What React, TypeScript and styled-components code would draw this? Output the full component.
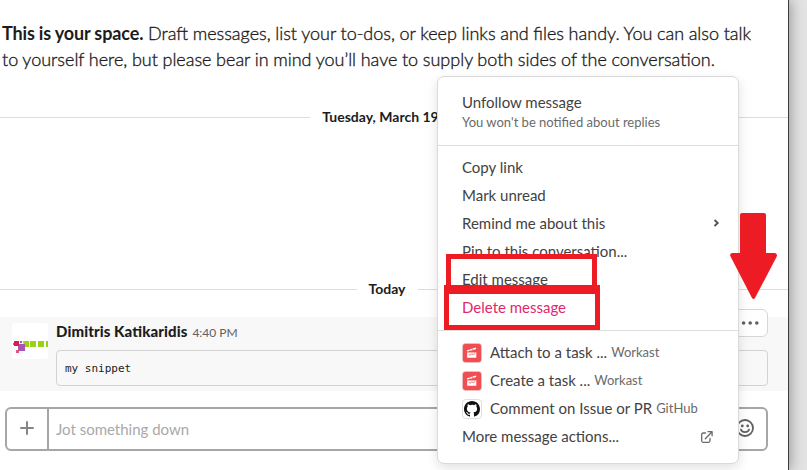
import React from "react";
import styled, { createGlobalStyle } from "styled-components";

const GlobalStyle = createGlobalStyle`
  * { box-sizing: border-box; }
  body { margin: 0; background: #e3e3e3; font-family: Lato, "Noto Sans", sans-serif; overflow: hidden; }
`;

const Page = styled.main`
  position: relative;
  width: 807px;
  height: 470px;
  overflow: hidden;
  display: flex;
  background: #e3e3e3;
`;

const Channel = styled.section`
  width: 789px;
  height: 470px;
  flex: none;
  background: #fff;
  border-right: 1px solid #3c3c3e;
  box-shadow: 2px 0 12px rgba(0, 0, 0, 0.32);
  display: flex;
  flex-direction: column;
  overflow: hidden;
`;

const Intro = styled.p`
  margin: 20px 0 0 2px;
  height: 53px;
  font-size: 18px;
  line-height: 26px;
  color: #1d1c1d;
  font-weight: 300;
  word-spacing: -0.28px;
  -webkit-text-stroke: 0.35px #1d1c1d;
  white-space: nowrap;
`;

const IntroLead = styled.b`
  font-weight: 700;
  letter-spacing: -0.1px;
  -webkit-text-stroke: 0;
`;

const DateDivider = styled.div<{ $gap: number }>`
  margin: ${(p) => p.$gap}px 0 0 -14px;
  height: 20px;
  display: flex;
  align-items: center;
  gap: 12px;
  font-size: 14px;
  line-height: 20px;
  font-weight: 700;
  color: #1d1c1d;
  white-space: nowrap;
  &::before, &::after { content: ""; flex: 1; height: 1px; background: #dddddd; }
`;

const Message = styled.article`
  position: relative;
  margin-top: 18px;
  height: 74px;
  padding: 6px 20px 5px 12px;
  background: #f8f8f8;
  display: flex;
  gap: 8px;
`;

const Avatar = styled.svg`
  flex: none;
  width: 36px;
  height: 36px;
  border-radius: 3px;
  background: #fff;
`;

const MessageBody = styled.div`
  flex: 1;
`;

const Meta = styled.div`
  height: 27px;
  line-height: 16px;
  display: flex;
  align-items: baseline;
  gap: 5px;
`;

const Author = styled.strong`
  font-size: 15px;
  font-weight: 900;
  letter-spacing: 0.1px;
  font-feature-settings: "liga" 1;
  color: #1d1c1d;
`;

const Time = styled.span`
  font-size: 12px;
  color: #616061;
`;

const Snippet = styled.pre`
  margin: 0;
  height: 36px;
  padding: 0 8px;
  border: 1px solid #d2d2d2;
  border-radius: 4px;
  font: 11px/35px "DejaVu Sans Mono", monospace;
  color: #1d1c1d;
`;

const HoverActions = styled.div`
  position: absolute;
  top: -8px;
  right: 20px;
  width: 50px;
  height: 28px;
  padding-right: 8px;
  display: flex;
  align-items: center;
  justify-content: flex-end;
  border: 1px solid #d6d6d6;
  border-radius: 6px;
  background: #fff;
`;

const Composer = styled.div`
  margin: 16px 20px 0 5px;
  height: 44px;
  display: flex;
  border: 2px solid #a6a6a6;
  border-radius: 6px;
`;

const AttachButton = styled.div`
  width: 42px;
  border-right: 2px solid #a6a6a6;
  display: flex;
  align-items: center;
  justify-content: center;
  padding-bottom: 2px;
`;

const Placeholder = styled.span`
  flex: 1;
  padding-left: 7px;
  font-size: 15px;
  line-height: 40px;
  color: #a9a9a9;
`;

const EmojiButton = styled.div`
  width: 40px;
  padding: 9px 0 0 9px;
`;

const Menu = styled.nav`
  position: absolute;
  left: 437px;
  top: 76px;
  width: 302px;
  height: 388px;
  border: 1px solid #dadada;
  border-radius: 7px;
  background: #fff;
  box-shadow: 0 4px 12px rgba(0, 0, 0, 0.12);
  color: #434243;
  font-size: 15px;
`;

const MenuHeader = styled.div`
  height: 69px;
  padding: 15px 24px 0;
  border-bottom: 1px solid #dddddd;
`;

const HeaderTitle = styled.div`
  line-height: 20px;
`;

const HeaderNote = styled.div`
  font-size: 13px;
  line-height: 20px;
  color: #6b6a6b;
`;

const MenuGroup = styled.div`
  padding: 7px 18px 9px 24px;
  & + & { border-top: 1px solid #dddddd; }
`;

const MenuItem = styled.div<{ $danger?: boolean }>`
  height: 28px;
  line-height: 28px;
  display: flex;
  align-items: center;
  white-space: nowrap;
  color: ${(p) => (p.$danger ? "#e3286a" : "inherit")};
  & > svg:last-child { margin-left: auto; }
`;

const AppIcon = styled.svg`
  width: 20px;
  height: 20px;
  flex: none;
  margin: 2px 8px 0 0;
`;

const AppName = styled.span`
  margin-left: 4px;
  font-size: 13px;
  line-height: 30px;
  color: #6b6a6b;
`;

const Highlight = styled.div<{ $x: number; $y: number; $w: number; $h: number }>`
  position: absolute;
  left: ${(p) => p.$x}px;
  top: ${(p) => p.$y}px;
  width: ${(p) => p.$w}px;
  height: ${(p) => p.$h}px;
  border: 5px solid #ed1c24;
`;

const Arrow = styled.svg`
  position: absolute;
  left: 729px;
  top: 212px;
`;

const WorkastIcon = () => (
  <AppIcon viewBox="0 0 20 20">
    <rect x="0.5" y="0.5" width="19" height="19" rx="3" fill="#f04e53" stroke="#e3d5d5" strokeWidth="0.5" />
    <path d="M5 7.2 13.8 4.4 14.3 6 5.4 8.8Z M5.2 9H14.3V14.8H5.2Z" fill="#fff" />
    <path d="M7 6.6 8.6 8M10 5.7 11.5 7.1M5.2 9.1H14.3M6.8 11.2 8.1 12.3 10 10.7 11.2 11.8 13.4 10.2" stroke="#f04e53" strokeWidth="0.8" fill="none" />
  </AppIcon>
);

const GitHubIcon = () => (
  <AppIcon viewBox="0 0 20 20">
    <rect x="0.5" y="0.5" width="19" height="19" rx="3" fill="#fff" stroke="#dedede" />
    <path
      transform="translate(2 2)"
      fill="#111"
      d="M8 0C3.58 0 0 3.58 0 8c0 3.54 2.29 6.53 5.47 7.59.4.07.55-.17.55-.38 0-.19-.01-.82-.01-1.49-2.01.37-2.53-.49-2.69-.94-.09-.23-.48-.94-.82-1.13-.28-.15-.68-.52-.01-.53.63-.01 1.08.58 1.23.82.72 1.21 1.87.87 2.33.66.07-.52.28-.87.51-1.07-1.78-.2-3.64-.89-3.64-3.95 0-.87.31-1.59.82-2.15-.08-.2-.36-1.02.08-2.12 0 0 .67-.21 2.2.82A7.6 7.6 0 0 1 8 3.86c.68 0 1.36.09 2 .27 1.53-1.04 2.2-.82 2.2-.82.44 1.1.16 1.92.08 2.12.51.56.82 1.27.82 2.15 0 3.07-1.87 3.75-3.65 3.95.29.25.54.73.54 1.48 0 1.07-.01 1.93-.01 2.2 0 .21.15.46.55.38A8.01 8.01 0 0 0 16 8c0-4.42-3.58-8-8-8Z"
    />
  </AppIcon>
);

export default function App() {
  return (
    <>
      <GlobalStyle />
      <Page>
        <Channel>
          <Intro>
            <IntroLead>This is your space.</IntroLead> Draft messages, list your to-dos, or keep links and files handy. You can also talk
            <br />
            to yourself here, but please bear in mind you’ll have to supply both sides of the conversation.
          </Intro>
          <DateDivider $gap={34}>Tuesday, March 19th</DateDivider>
          <DateDivider $gap={152}>Today</DateDivider>
          <Message>
            <Avatar viewBox="0 0 36 36">
              <path d="M11 18H17V24H12Z M18 18H24V24H18Z M26 18H32V24H26Z M34 18H36V24H34Z" fill="#9bd117" />
              <path d="M6 21H13V28H6Z M8 18H10V20H8Z" fill="#a855b5" />
              <path d="M2 18H7V23H2Z" fill="#d91c50" />
              <path d="M1 20H2V22H1Z M4 27H7V30H4Z" fill="#ea5078" />
            </Avatar>
            <MessageBody>
              <Meta>
                <Author>Dimitris Katikaridis</Author>
                <Time>4:40 PM</Time>
              </Meta>
              <Snippet>my snippet</Snippet>
            </MessageBody>
            <HoverActions>
              <svg width="18" height="6" viewBox="0 0 18 6" fill="#616061">
                <circle cx="2.6" cy="3" r="1.8" />
                <circle cx="9.2" cy="3" r="1.8" />
                <circle cx="15.8" cy="3" r="1.8" />
              </svg>
            </HoverActions>
          </Message>
          <Composer>
            <AttachButton>
              <svg width="14" height="14" viewBox="0 0 14 14" stroke="#868686" strokeWidth="2" strokeLinecap="round">
                <path d="M7 1V13M1 7H13" />
              </svg>
            </AttachButton>
            <Placeholder>Jot something down</Placeholder>
            <EmojiButton>
              <svg width="20" height="20" viewBox="0 0 20 20" fill="none" stroke="#616061">
                <circle cx="10" cy="10" r="8" strokeWidth="1.8" />
                <path d="M5.9 11.5C7.2 15 12.8 15 14.1 11.5" strokeWidth="1.7" strokeLinecap="round" />
                <circle cx="7.3" cy="7.9" r="1.4" fill="#616061" stroke="none" />
                <circle cx="12.7" cy="7.9" r="1.4" fill="#616061" stroke="none" />
              </svg>
            </EmojiButton>
          </Composer>
        </Channel>

        <Menu>
          <MenuHeader>
            <HeaderTitle>Unfollow message</HeaderTitle>
            <HeaderNote>You won't be notified about replies</HeaderNote>
          </MenuHeader>
          <MenuGroup>
            <MenuItem>Copy link</MenuItem>
            <MenuItem>Mark unread</MenuItem>
            <MenuItem>
              Remind me about this
              <svg width="8" height="10" viewBox="0 0 8 10" fill="none" stroke="#555" strokeWidth="1.9">
                <path d="M2.5 2 5.7 5 2.5 8" />
              </svg>
            </MenuItem>
            <MenuItem>Pin to this conversation...</MenuItem>
            <MenuItem>Edit message</MenuItem>
            <MenuItem $danger>Delete message</MenuItem>
          </MenuGroup>
          <MenuGroup>
            <MenuItem>
              <WorkastIcon />
              Attach to a task ... <AppName>Workast</AppName>
            </MenuItem>
            <MenuItem>
              <WorkastIcon />
              Create a task ... <AppName>Workast</AppName>
            </MenuItem>
            <MenuItem>
              <GitHubIcon />
              Comment on Issue or PR <AppName>GitHub</AppName>
            </MenuItem>
            <MenuItem>
              More message actions...
              <svg width="20" height="14" viewBox="0 0 20 14" fill="none" stroke="#6c6b6c" strokeWidth="1.3" strokeLinecap="round" strokeLinejoin="round">
                <path d="M5.5 4H3.2Q1.7 4 1.7 5.5V11.8Q1.7 13.3 3.2 13.3H8.5Q10 13.3 10 11.8V9.5M5.3 9.7 11.8 3M8 2.7H12.1V6.8" />
              </svg>
            </MenuItem>
          </MenuGroup>
        </Menu>

        <Highlight $x={446} $y={254} $w={151} $h={40} />
        <Highlight $x={444} $y={285} $w={156} $h={45} />
        <Arrow width="50" height="89" viewBox="0 0 50 89">
          <path d="M13 1H35Q37 1 37 3V41H46Q49 42 47.5 45L26 86Q24.5 88 23 86L1.8 45Q0 42 3 41H11V3Q11 1 13 1Z" fill="#ed1c24" />
        </Arrow>
      </Page>
    </>
  );
}
